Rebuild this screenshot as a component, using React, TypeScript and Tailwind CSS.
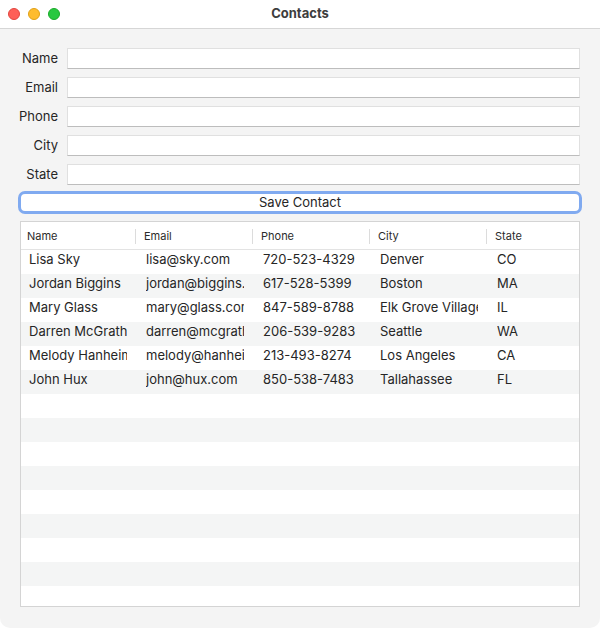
import React from "react";

type Contact = {
  name: string;
  email: string;
  phone: string;
  city: string;
  state: string;
};

const contacts: Contact[] = [
  { name: "Lisa Sky", email: "lisa@sky.com", phone: "720-523-4329", city: "Denver", state: "CO" },
  { name: "Jordan Biggins", email: "jordan@biggins.com", phone: "617-528-5399", city: "Boston", state: "MA" },
  { name: "Mary Glass", email: "mary@glass.com", phone: "847-589-8788", city: "Elk Grove Village", state: "IL" },
  { name: "Darren McGrath", email: "darren@mcgrath.com", phone: "206-539-9283", city: "Seattle", state: "WA" },
  { name: "Melody Hanheimer", email: "melody@hanheimer.com", phone: "213-493-8274", city: "Los Angeles", state: "CA" },
  { name: "John Hux", email: "john@hux.com", phone: "850-538-7483", city: "Tallahassee", state: "FL" },
];

const fields = ["Name", "Email", "Phone", "City", "State"];
const columns = ["Name", "Email", "Phone", "City", "State"];
const TOTAL_ROWS = 15;

const gridCols = "grid grid-cols-[114px_117px_117px_117px_1fr]";

const App = () => {
  const rows: (Contact | null)[] = Array.from({ length: TOTAL_ROWS }, (_, i) => contacts[i] ?? null);

  return (
    <div
      className="w-[600px] h-[628px] bg-white text-[#262626]"
      style={{ fontFamily: "Inter, 'Noto Sans', 'Liberation Sans', sans-serif" }}
    >
      <div className="h-full flex flex-col bg-[#f4f4f4] rounded-b-[10px] overflow-hidden">
        {/* title bar */}
        <div className="h-[29px] shrink-0 bg-white border-b border-[#d6d6d6] grid grid-cols-[1fr_auto_1fr] items-center">
          <div className="flex items-center gap-[8px] pl-[8px]">
            <span className="w-[12px] h-[12px] rounded-full bg-[#fe5f57] border border-[#e2463f]" />
            <span className="w-[12px] h-[12px] rounded-full bg-[#febc2e] border border-[#e1a116]" />
            <span className="w-[12px] h-[12px] rounded-full bg-[#28c840] border border-[#1aab29]" />
          </div>
          <div className="text-[13px] font-bold text-[#3d3d3d]">Contacts</div>
          <div />
        </div>

        {/* form */}
        <div className="flex flex-col gap-[8px] pt-[19px] pr-[20px]">
          {fields.map((f) => (
            <div key={f} className="flex items-center gap-[9px]">
              <label className="w-[58px] text-right text-[13px] text-[#262626]">{f}</label>
              <div className="flex-1 h-[21px] bg-white border border-[#e0e0e0] border-b-[#bdbdbd]" />
            </div>
          ))}
        </div>

        <div className="mx-[18px] mt-[6px] h-[23px] rounded-[7px] border-[3px] border-[#80aaf0] bg-white flex items-center justify-center text-[13px] text-[#262626]">
          Save Contact
        </div>

        {/* table */}
        <div className="flex-1 mx-[20px] mt-[7px] mb-[21px] bg-white border border-[#d4d4d4] overflow-hidden flex flex-col">
          <div className={`${gridCols} h-[28px] shrink-0 border-b border-[#e3e3e3] items-center pt-[2px] text-[11px] text-[#2b2b2b]`}>
            {columns.map((c, i) => (
              <div
                key={c}
                className={i === 0 ? "pl-[6px]" : "pl-[8px] border-l border-[#dcdcdc] h-[15px] flex items-center"}
              >
                {c}
              </div>
            ))}
          </div>
          {rows.map((r, i) => (
            <div
              key={i}
              className={`${gridCols} h-[24px] shrink-0 items-start text-[13px] leading-[18px] ${i % 2 === 1 ? "bg-[#f4f5f5]" : "bg-white"}`}
            >
              {r &&
                [r.name, r.email, r.phone, r.city, r.state].map((v, j) => (
                  <div key={j} className={`pr-[8px] ${j === 0 ? "pl-[8px]" : "pl-[11px]"}`}>
                    <div className="overflow-hidden whitespace-nowrap">{v}</div>
                  </div>
                ))}
            </div>
          ))}
        </div>
      </div>
    </div>
  );
};

export default App;
